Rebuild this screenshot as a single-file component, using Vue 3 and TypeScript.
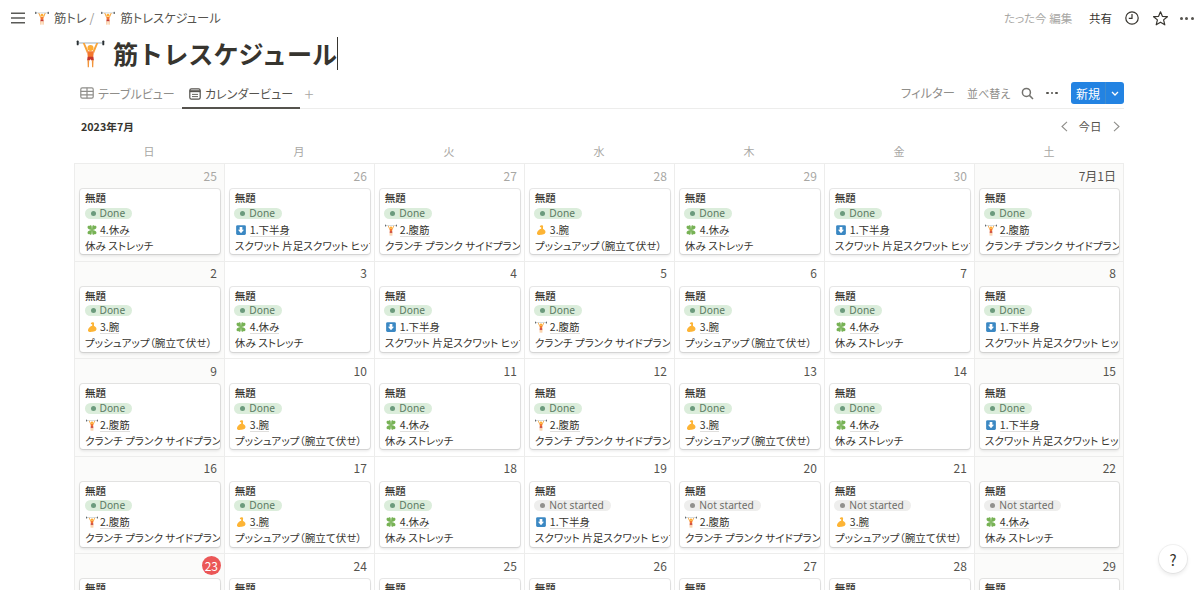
<script setup lang="ts">
type Kind = 'legs' | 'abs' | 'arm' | 'rest'
interface Day { label: string; kind: Kind; started: boolean; weekend: boolean; muted: boolean }

const info: Record<Kind, { name: string; detail: string }> = {
  legs: { name: '1.下半身', detail: 'スクワット 片足スクワット ヒップリフト' },
  abs: { name: '2.腹筋', detail: 'クランチ プランク サイドプランク' },
  arm: { name: '3.腕', detail: 'プッシュアップ（腕立て伏せ）' },
  rest: { name: '4.休み', detail: '休み ストレッチ' },
}
const weekdays = ['日', '月', '火', '水', '木', '金', '土']
const labels = [
  ['25', '26', '27', '28', '29', '30', '7月1日'],
  ['2', '3', '4', '5', '6', '7', '8'],
  ['9', '10', '11', '12', '13', '14', '15'],
  ['16', '17', '18', '19', '20', '21', '22'],
]
const kinds: Kind[][] = [
  ['rest', 'legs', 'abs', 'arm', 'rest', 'legs', 'abs'],
  ['arm', 'rest', 'legs', 'abs', 'arm', 'rest', 'legs'],
  ['abs', 'arm', 'rest', 'abs', 'arm', 'rest', 'legs'],
  ['abs', 'arm', 'rest', 'legs', 'abs', 'arm', 'rest'],
]
const weeks: Day[][] = labels.map((row, r) =>
  row.map((label, c) => ({
    label,
    kind: kinds[r][c],
    started: !(r === 3 && c >= 3),
    weekend: c === 0 || c === 6,
    muted: r === 0 && c < 6,
  })),
)
const lastWeek = ['23', '24', '25', '26', '27', '28', '29']
const iconOf: Record<Kind, string> = { abs: '#lifter', legs: '#down', arm: '#arm', rest: '#clover' }
</script>

<template>
  <div class="page">
    <svg class="defs" width="0" height="0" aria-hidden="true">
      <defs>
        <symbol id="lifter" viewBox="0 0 24 24">
          <rect x="1" y="2.9" width="22" height="0.8" fill="#99aab5" />
          <rect x="0.6" y="1.2" width="1.6" height="4" rx="0.7" fill="#292f33" />
          <rect x="21.8" y="1.2" width="1.6" height="4" rx="0.7" fill="#292f33" />
          <path d="M5.6 3.4 L7.2 3.4 L10 9.5 L9 11.5 Z M18.4 3.4 L16.8 3.4 L14 9.5 L15 11.5 Z" fill="#f7a33a" />
          <circle cx="12" cy="7.4" r="2.5" fill="#ffac33" />
          <path d="M9.2 10.2 H14.8 L14.2 15 H9.8 Z" fill="#f4762e" />
          <path d="M9.6 14.6 H14.4 L14.8 17.5 L13.2 18 L12 16.8 L10.8 18 L9.2 17.5 Z" fill="#c5362b" />
          <path d="M9.5 17.4 L10.9 17.8 L10.7 23.4 L9.7 23.4 Z M14.5 17.4 L13.1 17.8 L13.3 23.4 L14.3 23.4 Z" fill="#f2943a" />
        </symbol>
        <symbol id="clover" viewBox="0 0 16 16">
          <g fill="#77b255">
            <path d="M8 8 C5 7.5 2.2 7 2 4.2 C2 2.6 3.4 1.8 4.6 2.6 C5 1 7.6 1.2 7.6 3.4 Z" />
            <path d="M8 8 C11 7.5 13.8 7 14 4.2 C14 2.6 12.6 1.8 11.4 2.6 C11 1 8.4 1.2 8.4 3.4 Z" />
            <path d="M8 8 C5 8.5 2.2 9 2 11.8 C2 13.4 3.4 14.2 4.6 13.4 C5 15 7.6 14.8 7.6 12.6 Z" />
            <path d="M8 8 C11 8.5 13.8 9 14 11.8 C14 13.4 12.6 14.2 11.4 13.4 C11 15 8.4 14.8 8.4 12.6 Z" />
          </g>
        </symbol>
        <symbol id="down" viewBox="0 0 16 16">
          <rect x="1.5" y="1.5" width="13" height="13" rx="1.8" fill="#3b88c3" />
          <path d="M8 12.4 L4 7.8 H6.2 V4 H9.8 V7.8 H12 Z" fill="#fff" />
        </symbol>
        <symbol id="arm" viewBox="0 0 16 16">
          <path d="M9 1.6 C7.4 1.4 6.4 2.6 6.4 3.4 C6.6 4.4 7.8 4.4 8.4 4.6 L8.2 6.4 C5.6 7 3.6 9.4 2.8 11.2 C2 13.6 3.8 14.6 6.4 14.6 C10 14.6 13.8 14 14 10.8 C14 8.4 11.8 7 10.6 6.8 L10.8 3.2 C10.8 2.2 10 1.7 9 1.6 Z" fill="#fdb435" />
        </symbol>
      </defs>
    </svg>

    <header class="topbar">
      <svg class="menu" width="14" height="12" viewBox="0 0 14 12"><path d="M0 1.2H14M0 6H14M0 10.8H14" stroke="#5a5a57" stroke-width="1.4" /></svg>
      <div class="crumbs">
        <svg class="crumb-ico"><use href="#lifter" /></svg>
        <span class="crumb-a">筋トレ</span>
        <span class="slash">/</span>
        <svg class="crumb-ico"><use href="#lifter" /></svg>
        <span>筋トレスケジュール</span>
      </div>
      <div class="top-actions">
        <span class="edited">たった今 編集</span>
        <span class="share">共有</span>
        <svg class="clock" width="16" height="16" viewBox="0 0 16 16" fill="none" stroke="#37352f" stroke-width="1.2"><circle cx="8" cy="8" r="6.2" /><path d="M8 4V8.4H4.8" /></svg>
        <svg class="star" width="17" height="17" viewBox="0 0 17 17" fill="none" stroke="#37352f" stroke-width="1.2" stroke-linejoin="round"><path d="M8.5 1.8L10.4 6.3L15.4 6.7L11.6 9.9L12.8 14.8L8.5 12.2L4.2 14.8L5.4 9.9L1.6 6.7L6.6 6.3Z" /></svg>
        <span class="dots big"><i /><i /><i /></span>
      </div>
    </header>

    <div class="content">
      <h1 class="title">
        <svg class="title-ico"><use href="#lifter" /></svg>
        <span class="title-text">筋トレスケジュール</span><span class="caret" />
      </h1>

      <div class="viewbar">
        <div class="tab first">
          <svg width="14" height="12" viewBox="0 0 14 12" fill="none" stroke="#8f8e8a" stroke-width="1.2"><rect x="0.8" y="0.8" width="12.4" height="10.4" rx="1.4" /><path d="M0.8 4.4H13.2M0.8 7.8H13.2M7 0.8V11.2" /></svg>
          <span>テーブルビュー</span>
        </div>
        <div class="tab active">
          <svg width="12" height="12" viewBox="0 0 12 12" fill="none" stroke="#55534e" stroke-width="1.2"><rect x="0.8" y="0.8" width="10.4" height="10.4" rx="1.6" /><path d="M0.8 3.2H11.2" stroke-width="2" /><path d="M3 6.4H9M3 8.6H9" stroke-width="0.9" /></svg>
          <span>カレンダービュー</span>
        </div>
        <span class="plus">+</span>
        <div class="view-actions">
          <span class="va filter">フィルター</span>
          <span class="va sort">並べ替え</span>
          <svg class="search" width="13" height="13" viewBox="0 0 13 13" fill="none" stroke="#73726e" stroke-width="1.5"><circle cx="5.4" cy="5.4" r="4" /><path d="M8.4 8.4L12 12" /></svg>
          <span class="dots"><i /><i /><i /></span>
          <div class="new-btn">
            <span class="new-main">新規</span>
            <span class="new-arrow"><svg width="8" height="5" viewBox="0 0 8 5" fill="none" stroke="#fff" stroke-width="1.3"><path d="M1 1L4 4L7 1" /></svg></span>
          </div>
        </div>
      </div>

      <div class="monthbar">
        <span class="month">2023年7月</span>
        <div class="nav">
          <svg width="7" height="11" viewBox="0 0 7 11" fill="none" stroke="#8f8e8a" stroke-width="1.1"><path d="M6 0.8L1 5.5L6 10.2" /></svg>
          <span class="today-btn">今日</span>
          <svg width="7" height="11" viewBox="0 0 7 11" fill="none" stroke="#8f8e8a" stroke-width="1.1"><path d="M1 0.8L6 5.5L1 10.2" /></svg>
        </div>
      </div>

      <div class="weekdays">
        <span v-for="w in weekdays" :key="w">{{ w }}</span>
      </div>

      <div class="calendar">
        <div v-for="(week, r) in weeks" :key="r" class="week">
          <div v-for="day in week" :key="day.label" class="cell" :class="{ weekend: day.weekend }">
            <div class="num" :class="{ muted: day.muted }">{{ day.label }}</div>
            <article class="card">
              <div class="card-title">無題</div>
              <div class="tag-row">
                <span class="tag" :class="day.started ? 'done' : 'todo'"><i class="dot" />{{ day.started ? 'Done' : 'Not started' }}</span>
              </div>
              <div class="rel">
                <svg class="rel-ico"><use :href="iconOf[day.kind]" /></svg>
                <span class="rel-name">{{ info[day.kind].name }}</span>
              </div>
              <div class="detail">{{ info[day.kind].detail }}</div>
            </article>
          </div>
        </div>
        <div class="week">
          <div v-for="(n, c) in lastWeek" :key="n" class="cell" :class="{ weekend: c === 0 || c === 6 }">
            <div class="num"><span :class="{ today: n === '23' }">{{ n }}</span></div>
            <article class="card"><div class="card-title">無題</div></article>
          </div>
        </div>
      </div>
    </div>

    <div class="help">?</div>
  </div>
</template>

<style>
html, body { margin: 0; padding: 0; background: #fff; overflow: hidden; }
</style>

<style scoped>
.page {
  position: relative;
  width: 1200px;
  height: 590px;
  overflow: hidden;
  background: #fff;
  color: #37352f;
  font-family: "Noto Sans CJK JP", "Noto Sans", sans-serif;
  font-feature-settings: "palt";
}
.defs { position: absolute; }
.topbar { display: flex; align-items: center; height: 36px; padding: 0 5.5px 0 11px; }
.menu { flex: none; }
.crumbs { display: flex; align-items: center; margin-left: 10px; font-size: 12.3px; color: #55534e; }
.crumb-ico { width: 14px; height: 14px; margin-right: 5px; }
.crumb-a { margin-right: 3px; }
.slash { margin-right: 7px; color: #9b9a97; }
.top-actions { margin-left: auto; display: flex; align-items: center; font-size: 11.5px; }
.edited { color: #a8a7a4; width: 68px; white-space: nowrap; }
.share { margin-left: 17px; color: #37352f; }
.clock { margin-left: 12px; }
.star { margin-left: 11.5px; }
.dots { display: inline-flex; gap: 2px; align-items: center; }
.dots i { width: 2.6px; height: 2.6px; border-radius: 50%; background: #55534e; }
.dots.big { margin-left: 11px; width: 15px; gap: 2.5px; }
.dots.big i { width: 3px; height: 3px; }
.content { padding: 0 76px 0 74px; }
.title {
  display: flex;
  align-items: center;
  height: 34px;
  margin: 0 0 4px;
  font-size: 25.1px;
  line-height: 34px;
  font-weight: 700;
  color: #37352f;
  font-feature-settings: normal;
}
.title-ico { width: 29px; height: 29px; margin: 0 8px 0 2px; flex: none; }
.title-text { white-space: nowrap; }
.caret { width: 1px; height: 33px; background: #37352f; }
.viewbar {
  display: flex;
  align-items: stretch;
  box-sizing: border-box;
  height: 35px;
  padding-top: 4px;
  margin-left: 6px;
  border-bottom: 1px solid #ededec;
  font-size: 12px;
  color: #8f8e8a;
}
.tab { display: flex; align-items: center; gap: 4px; padding: 0 7px; white-space: nowrap; }
.tab svg { flex: none; }
.tab.first { width: 101.5px; padding: 0; }
.tab.active { position: relative; width: 104px; color: #55534e; gap: 4.5px; box-shadow: inset 0 -2px 0 #55534e; margin-bottom: -1px; }
.plus { display: flex; align-items: center; margin-left: 5px; font-size: 17px; font-weight: 300; color: #a8a7a4; }
.view-actions { margin-left: auto; display: flex; align-items: center; }
.va { white-space: nowrap; }
.filter { width: 66px; font-size: 12.3px; }
.sort { font-size: 11px; }
.search { margin-left: 11px; }
.view-actions .dots { margin-left: 12px; }
.new-btn {
  display: flex;
  align-items: stretch;
  height: 22px;
  width: 53px;
  margin-left: 13px;
  border-radius: 3px;
  background: #2383e2;
  color: #fff;
  font-size: 12px;
}
.new-main { flex: 1; display: flex; align-items: center; justify-content: center; border-right: 1px solid #3f8ccf; }
.new-arrow { width: 18px; display: flex; align-items: center; justify-content: center; }
.monthbar { display: flex; align-items: center; justify-content: space-between; height: 34px; margin-left: 6px; }
.month { font-size: 10.7px; font-weight: 700; color: #37352f; margin-left: 1px; }
.nav { display: flex; align-items: center; gap: 11px; font-size: 11.5px; color: #55534e; margin-right: 4.5px; }
.today-btn { font-feature-settings: normal; }
.weekdays { display: grid; grid-template-columns: repeat(7, 150px); height: 20px; font-size: 11px; line-height: 16px; color: #a8a7a4; text-align: center; }
.calendar { border-top: 1px solid #ededec; border-left: 1px solid #ededec; width: 1050px; box-sizing: border-box; }
.week { display: grid; grid-template-columns: 149.86px repeat(5, 150px) 149.14px; height: 97.5px; box-sizing: border-box; border-bottom: 1px solid #ededec; }
.cell { box-sizing: border-box; border-right: 1px solid #ededec; padding: 0 4px 0 5px; overflow: hidden; }
.cell.weekend { background: #fbfbfa; }
.num { display: flex; justify-content: flex-end; align-items: center; height: 22px; margin: 0 3px 3px 0; font-size: 12px; color: #55534e; }
.num.muted { color: #a8a7a4; }
.num span { display: inline-flex; align-items: center; justify-content: center; }
.today { width: 19px; height: 19px; margin-right: -4px; border-radius: 50%; background: #eb5757; color: #fff; }
.card {
  box-sizing: border-box;
  height: 65px;
  padding: 1px 0 0 5px;
  border-radius: 3px;
  background: #fff;
  box-shadow: 0 0 0 1px rgba(15, 15, 15, 0.1), 0 2px 3px rgba(15, 15, 15, 0.1);
  overflow: hidden;
  white-space: nowrap;
  font-size: 11px;
}
.card-title { height: 15px; line-height: 15px; font-size: 10.5px; font-weight: 500; }
.tag-row { height: 16px; display: flex; align-items: center; margin-left: -0.5px; }
.tag { display: inline-flex; align-items: center; height: 11px; padding: 0 7px 0 6px; border-radius: 6px; font-size: 10.2px; line-height: 11px; font-family: "Noto Sans", sans-serif; }
.done { background: #dbeddb; color: #5a7a63; }
.todo { background: #eeeeed; color: #6f6e69; }
.dot { width: 5px; height: 5px; border-radius: 50%; margin-right: 4px; }
.done .dot { background: #6c9b7d; }
.todo .dot { background: #91918e; }
.rel { display: flex; align-items: center; height: 16px; margin-top: 0.5px; }
.rel-ico { width: 12px; height: 12px; margin: 0 2.5px 0 0.5px; flex: none; }
.rel-name { font-size: 10.5px; color: #37352f; border-bottom: 1px solid #dfdedc; line-height: 13px; }
.detail { height: 15px; line-height: 15px; font-size: 10.6px; color: #37352f; overflow: hidden; }
.help {
  position: absolute;
  left: 1159px;
  top: 545px;
  width: 28px;
  height: 28px;
  border-radius: 50%;
  background: #fff;
  box-shadow: 0 0 0 1px rgba(15, 15, 15, 0.05), 0 2px 4px rgba(15, 15, 15, 0.1);
  display: flex;
  align-items: center;
  justify-content: center;
  font-size: 15px;
  color: #37352f;
}
</style>
